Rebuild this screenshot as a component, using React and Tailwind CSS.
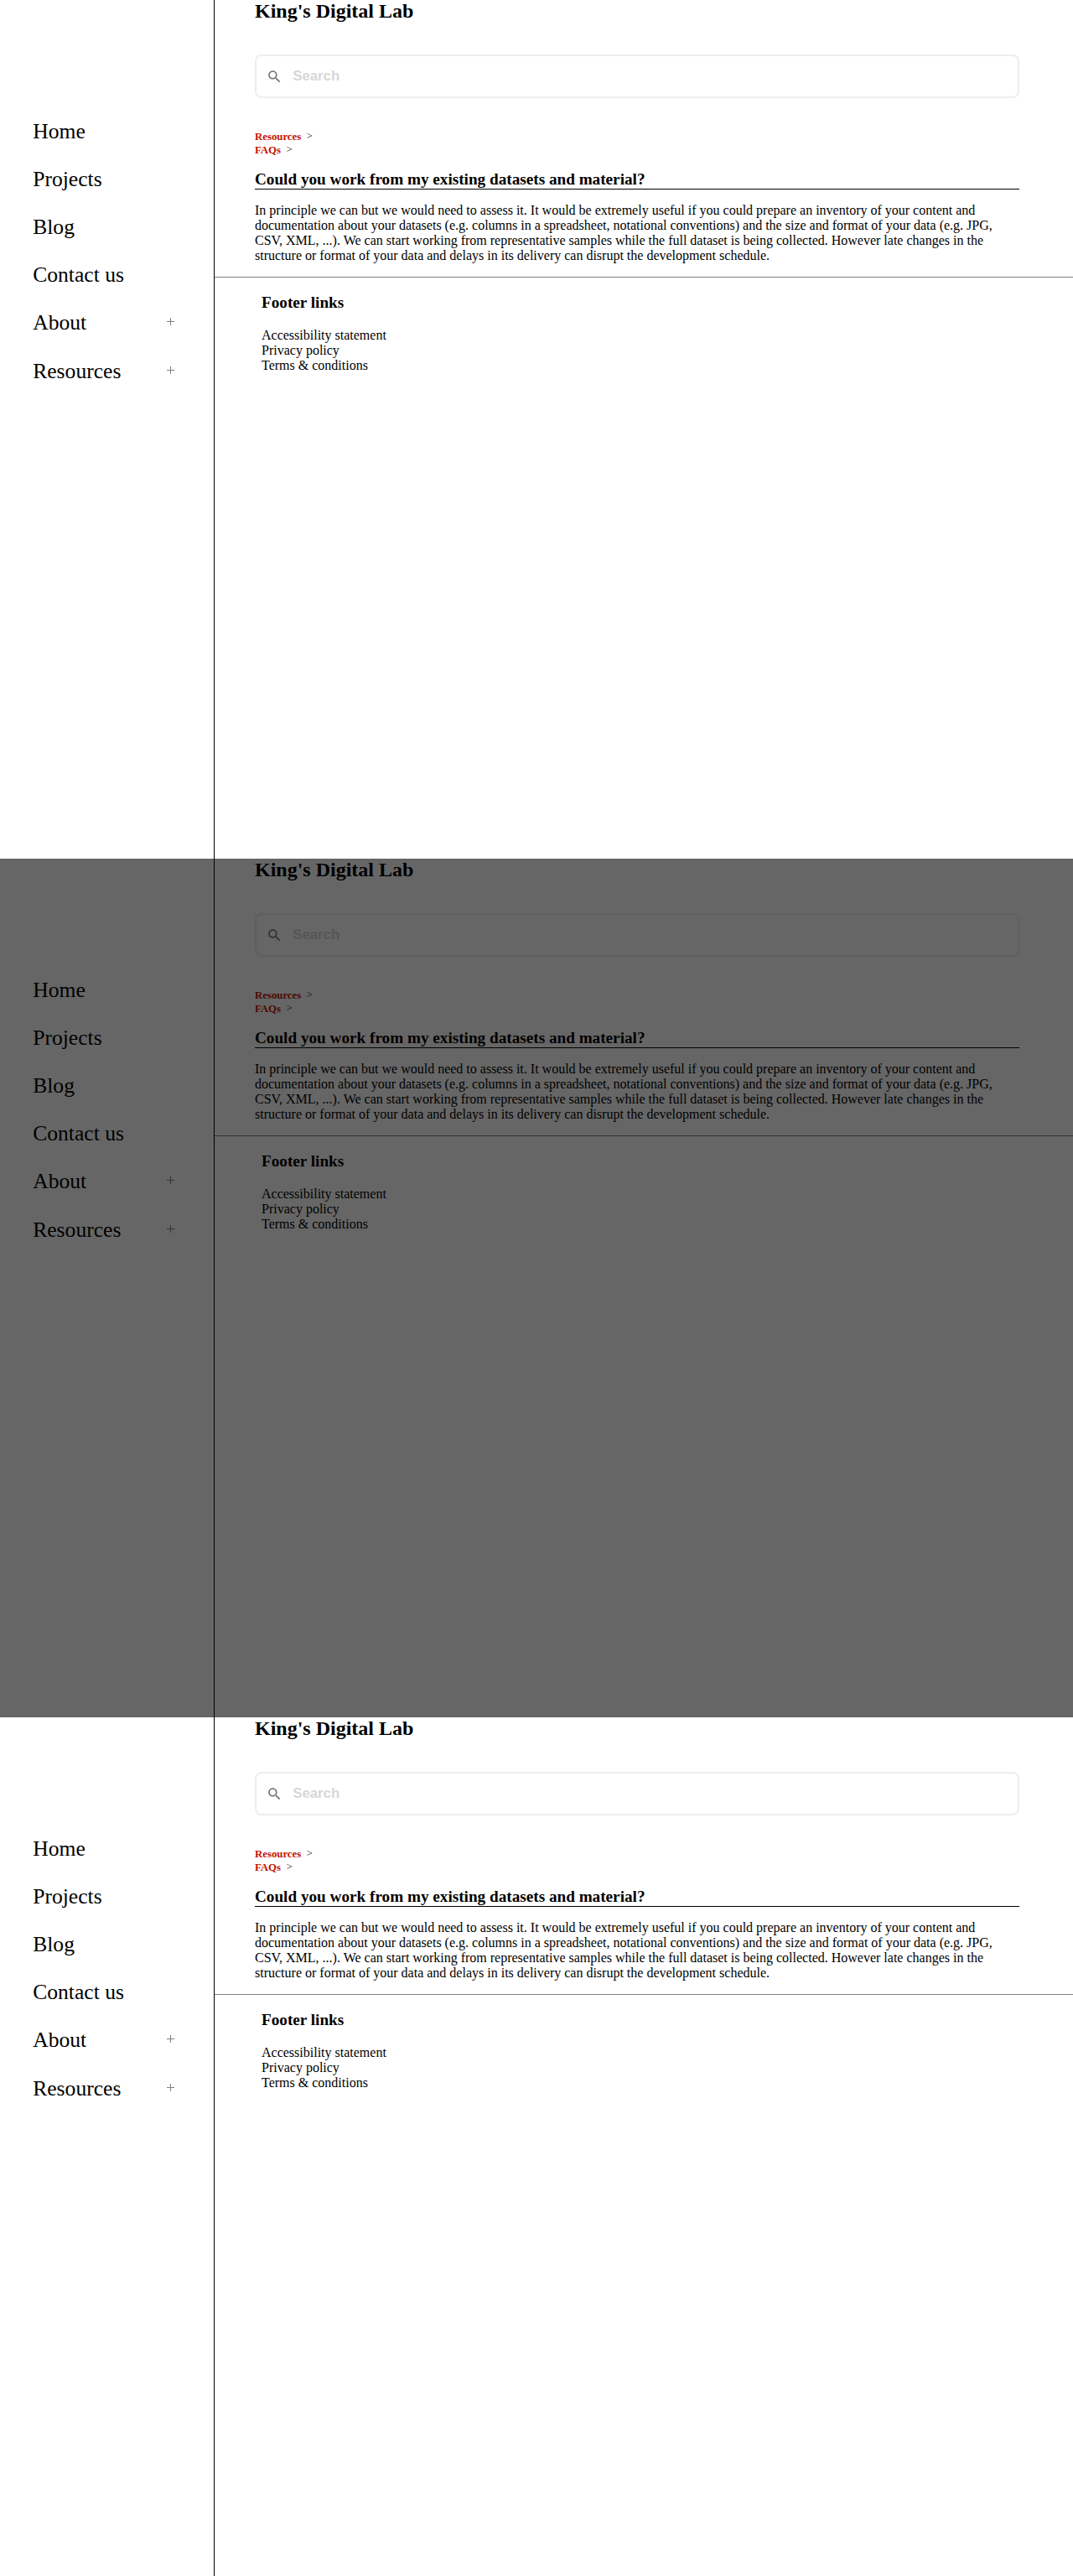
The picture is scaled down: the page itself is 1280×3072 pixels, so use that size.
const NAV = [
  { label: "Home", height: "h-[57px]" },
  { label: "Projects", height: "h-[57px]" },
  { label: "Blog", height: "h-[57px]" },
  { label: "Contact us", height: "h-[57px]" },
  { label: "About", height: "h-[58px]", expandable: true },
  { label: "Resources", height: "h-[58px]", expandable: true },
];

const CRUMBS = ["Resources", "FAQs"];
const FOOTER_LINKS = ["Accessibility statement", "Privacy policy", "Terms & conditions"];

function SearchIcon() {
  return (
    <svg className="h-[14.4px] w-[14.4px] shrink-0 opacity-70" viewBox="0 0 18 18" fill="#393939">
      <path d="M12.755 11.255H11.965L11.685 10.985C12.665 9.845 13.255 8.365 13.255 6.755C13.255 3.165 10.345 0.255 6.755 0.255C3.165 0.255 0.255 3.165 0.255 6.755C0.255 10.345 3.165 13.255 6.755 13.255C8.365 13.255 9.845 12.665 10.985 11.685L11.255 11.965V12.755L16.255 17.745L17.745 16.255L12.755 11.255ZM6.755 11.255C4.265 11.255 2.255 9.245 2.255 6.755C2.255 4.265 4.265 2.255 6.755 2.255C9.245 2.255 11.255 4.265 11.255 6.755C11.255 9.245 9.245 11.255 6.755 11.255Z" />
    </svg>
  );
}

function PlusIcon() {
  return (
    <svg className="mt-[9px] h-[9px] w-[9px]" viewBox="0 0 9 9" shapeRendering="crispEdges" fill="#808080">
      <rect x="4" y="0" width="1" height="9" />
      <rect x="0" y="4" width="9" height="1" />
    </svg>
  );
}

function Sidebar() {
  return (
    <nav className="w-64 shrink-0 border-r border-black pt-[142px] pr-[47px] pl-[39.2px]">
      <ul>
        {NAV.map((item) => (
          <li key={item.label} className={`flex items-start justify-between ${item.height}`}>
            <a className="text-[25.6px] leading-[29px]">{item.label}</a>
            {item.expandable && <PlusIcon />}
          </li>
        ))}
      </ul>
    </nav>
  );
}

function Page({ dimmed }) {
  return (
    <section className="relative flex h-[1024px] bg-white">
      <Sidebar />
      <div className="min-w-0 flex-1">
        <main className="pr-16 pl-12">
          <h1 className="h-[65px] text-2xl leading-[27px] font-bold">King's Digital Lab</h1>
          <div className="flex h-[52px] items-center rounded-lg border-2 border-[#eeeeee] pl-[14px]">
            <SearchIcon />
            <input
              placeholder="Search"
              className="ml-[14.8px] w-96 bg-transparent font-['Liberation_Sans',sans-serif] text-[16.8px] font-bold outline-none placeholder:text-[#393939] placeholder:opacity-20"
            />
          </div>
          <ol className="mt-[38px] text-[12.8px] leading-4">
            {CRUMBS.map((crumb) => (
              <li key={crumb} className="flex h-4">
                <a className="font-bold text-[#c41200]">{crumb}</a>
                <span className="-mt-px ml-[6.4px]">&gt;</span>
              </li>
            ))}
          </ol>
          <h2 className="mt-4 border-b border-black text-[19.2px] leading-[22px] font-bold">
            Could you work from my existing datasets and material?
          </h2>
          <p className="my-4 leading-[18px]">
            In principle we can but we would need to assess it. It would be extremely useful if you could prepare an
            inventory of your content and documentation about your datasets (e.g. columns in a spreadsheet, notational
            conventions) and the size and format of your data (e.g. JPG, CSV, XML, ...). We can start working from
            representative samples while the full dataset is being collected. However late changes in the structure or
            format of your data and delays in its delivery can disrupt the development schedule.
          </p>
        </main>
        <footer className="border-t border-[#808080] pt-[19px] pl-14">
          <h3 className="text-[19.2px] leading-[22px] font-bold">Footer links</h3>
          <ul className="mt-[19px] leading-[18px]">
            {FOOTER_LINKS.map((link) => (
              <li key={link}>{link}</li>
            ))}
          </ul>
        </footer>
      </div>
      {dimmed && <div className="absolute inset-0 bg-black/60" />}
    </section>
  );
}

export default function App() {
  return (
    <div className="w-[1280px] bg-white font-['Liberation_Serif',serif] text-base text-black">
      <Page />
      <Page dimmed />
      <Page />
    </div>
  );
}
